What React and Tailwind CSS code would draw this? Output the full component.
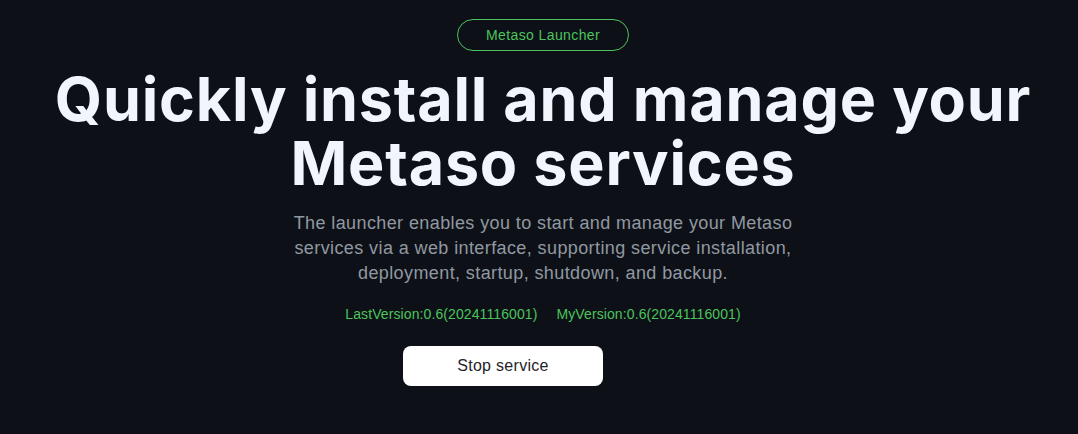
import React from 'react';

const lastVersion = '0.6(20241116001)';
const myVersion = '0.6(20241116001)';

export default function App() {
  return (
    <div className="min-h-screen bg-[#0d1117] flex flex-col items-center pt-[19px] pl-2 font-['Liberation_Sans',Arial,sans-serif]">
      {/* badge */}
      <div className="w-[172px] h-8 rounded-full border border-[#4cc35c] flex items-center justify-center text-[14px] tracking-[0.4px] text-[#4cc35c]">
        Metaso Launcher
      </div>

      {/* headline */}
      <h1 className="mt-4 text-center text-[61px] leading-[64px] tracking-[0.8px] font-bold text-[#f0f6fc] font-['Inter',sans-serif]">
        Quickly install and manage your
        <br />
        Metaso services
      </h1>

      <p className="mt-4 text-center text-[18px] leading-[25px] tracking-[0.4px] text-[#9198a1]">
        The launcher enables you to start and manage your Metaso
        <br />
        services via a web interface, supporting service installation,
        <br />
        deployment, startup, shutdown, and backup.
      </p>

      <div className="mt-[18px] flex items-center gap-[19px] text-[14px] leading-5 tracking-[0.1px] text-[#4cc35c]">
        <span>LastVersion:{lastVersion}</span>
        <span>MyVersion:{myVersion}</span>
      </div>

      <div className="mt-[22px] flex">
        <button className="w-[200px] h-10 rounded-lg bg-white text-[16px] tracking-[0.3px] font-medium text-[#1f2328]">
          Stop service
        </button>
        <div className="w-20" />
      </div>
    </div>
  );
}
